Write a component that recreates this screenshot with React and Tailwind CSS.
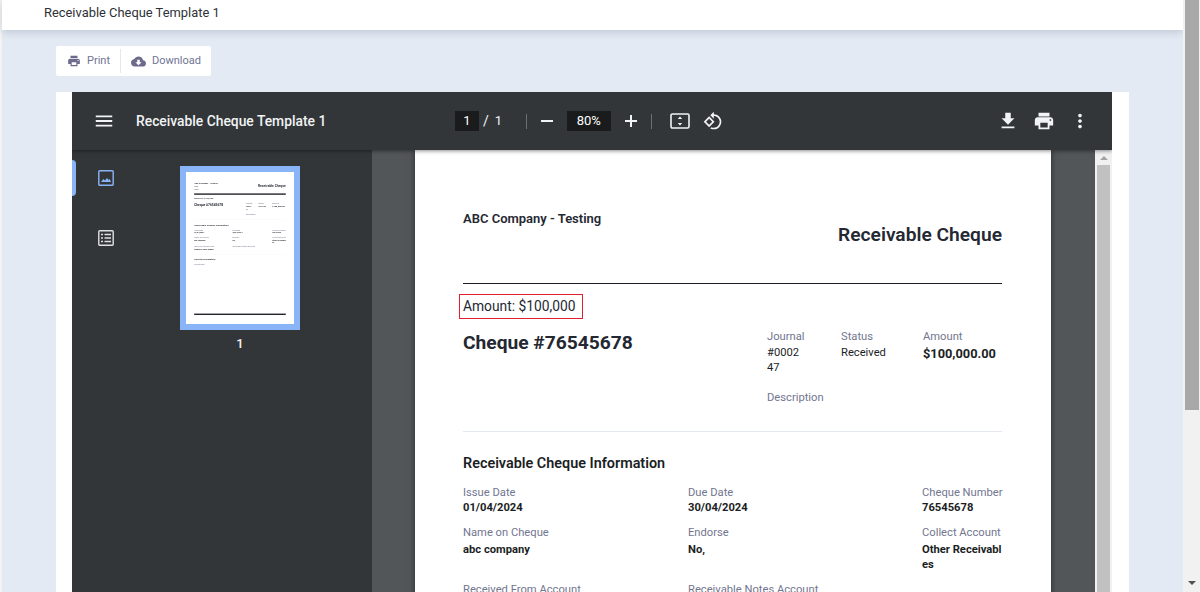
import React from "react";

const roboto = "[font-family:Roboto,sans-serif]";

function Icon({ d, className }) {
  return (
    <svg viewBox="0 0 24 24" fill="currentColor" className={className}>
      <path d={d} />
    </svg>
  );
}

const icons = {
  print: "M19 8H5c-1.66 0-3 1.34-3 3v6h4v4h12v-4h4v-6c0-1.66-1.34-3-3-3zm-3 11H8v-5h8v5zm3-7c-.55 0-1-.45-1-1s.45-1 1-1 1 .45 1 1-.45 1-1 1zm-1-9H6v4h12V3z",
  cloud: "M19.35 10.04C18.67 6.59 15.64 4 12 4 9.11 4 6.6 5.64 5.35 8.04 2.34 8.36 0 10.91 0 14c0 3.31 2.69 6 6 6h13c2.76 0 5-2.24 5-5 0-2.64-2.05-4.78-4.65-4.96zM17 13l-5 5-5-5h3V9h4v4h3z",
  download: "M19 9h-4V3H9v6H5l7 7 7-7zM5 18v2h14v-2H5z",
  menu: "M3 18h18v-2H3v2zm0-5h18v-2H3v2zm0-7v2h18V6H3z",
  more: "M12 8c1.1 0 2-.9 2-2s-.9-2-2-2-2 .9-2 2 .9 2 2 2zm0 2c-1.1 0-2 .9-2 2s.9 2 2 2 2-.9 2-2-.9-2-2-2zm0 6c-1.1 0-2 .9-2 2s.9 2 2 2 2-.9 2-2-.9-2-2-2z",
  rotate: "M7.34 6.41L.86 12.9l6.49 6.48 6.49-6.48-6.5-6.49zM3.69 12.9l3.66-3.66L11 12.9l-3.66 3.66-3.65-3.66zm15.67-6.26C17.61 4.88 15.3 4 13 4V.76L8.76 5 13 9.24V6c1.79 0 3.58.68 4.95 2.05 2.73 2.73 2.73 7.17 0 9.9C16.58 19.32 14.79 20 13 20c-.97 0-1.94-.21-2.84-.61l-1.49 1.49C10.02 21.62 11.51 22 13 22c2.3 0 4.61-.88 6.36-2.64 3.52-3.51 3.52-9.21 0-12.72z",
};

function Field({ label, value, className }) {
  return (
    <div className={className}>
      <div className="text-[11.2px] leading-[15px] text-[#72768f] whitespace-nowrap">{label}</div>
      {value && <div className="text-[11.2px] leading-[15px] font-bold text-[#1b1e24] break-all">{value}</div>}
    </div>
  );
}

// the pdf page, also used scaled down for the thumbnail
function PdfPage({ thumb }) {
  return (
    <div className={`w-[636px] h-[899px] bg-white flex flex-col pl-[48px] pr-[49px] text-[#1b1e24] ${roboto}`}>
      <div className={`h-[134px] relative pt-[61px] border-[#1b1e24] ${thumb ? "border-b-[8px]" : "border-b"}`}>
        <div className="text-[13px] leading-[16px] font-semibold text-[#242832]">ABC Company - Testing</div>
        {thumb && (
          <div className="text-[9px] leading-[18px] text-[#555]">
            <div>street</div>
            <div>village</div>
          </div>
        )}
        <div className="absolute right-0 top-[73px] text-[19.2px] leading-[24px] font-semibold text-[#242832]">Receivable Cheque</div>
      </div>
      <div className={`mt-[10px] -ml-[4px] w-[124px] h-[25px] border pl-[3px] text-[13.8px] leading-[22px] text-[#242832] whitespace-nowrap ${thumb ? "border-transparent" : "border-[#e0202e]"}`}>
        Amount: $100,000
      </div>
      <div className="flex pb-[26px] border-b border-[#e4e8f0] h-[113px]">
        <div className="w-[304px] pt-[12px] text-[19.2px] leading-[24px] font-bold text-[#242832]">Cheque #76545678</div>
        <div className="w-[74px] pt-[10px] text-[11.2px] leading-[15px]">
          <div className="text-[#72768f]">Journal</div>
          <div className="mt-px w-[38px] break-all">#000247</div>
          <div className="mt-[15px] text-[#72768f]">Description</div>
        </div>
        <div className="w-[82px] pt-[10px] text-[11.2px] leading-[15px]">
          <div className="text-[#72768f]">Status</div>
          <div className="mt-px">Received</div>
        </div>
        <div className="pt-[10px] text-[11.2px] leading-[15px]">
          <div className="text-[#72768f]">Amount</div>
          <div className="mt-px font-bold text-[12.8px] leading-[18px]">$100,000.00</div>
        </div>
      </div>
      <div className="mt-[23px] text-[14.4px] leading-[18px] font-semibold text-[#1b1e24]">Receivable Cheque Information</div>
      <div className="mt-[12px] grid grid-cols-[225px_234px_80px] content-start gap-y-[10px] h-[96px]">
        <Field label="Issue Date" value="01/04/2024" />
        <Field label="Due Date" value="30/04/2024" />
        <Field label="Cheque Number" value="76545678" />
        <Field label="Name on Cheque" value="abc company" className="[&>div:last-child]:mt-[2px]" />
        <Field label="Endorse" value="No," className="[&>div:last-child]:mt-[2px]" />
        <Field label="Collect Account" value="Other Receivables" className="[&>div:last-child]:mt-[2px]" />
      </div>
      <div className="mt-[1px] grid grid-cols-[225px_234px_80px] h-[51px]">
        <Field label="Received From Account" value="Employee Meal Sundry" />
        <Field label="Receivable Notes Account" />
      </div>
      <div className="border-t border-[#e4e8f0] pt-[20px] text-[14.4px] leading-[18px] font-semibold">Collect Information</div>
      <div className="mt-[12px] text-[11.2px] leading-[15px] text-[#72768f]">Collect Date</div>
      <div className={`mt-auto mb-[58px] border-[#1b1e24] ${thumb ? "border-t-[8px]" : "border-t"}`} />
    </div>
  );
}

function ToolbarIcon({ d, className = "" }) {
  return <Icon d={d} className={`w-[22px] h-[22px] text-[#f1f3f4] shrink-0 ${className}`} />;
}

function Toolbar() {
  return (
    <div className={`h-[58px] bg-[#323639] flex items-center relative z-10 shadow-[0_1px_4px_rgba(0,0,0,0.45)] text-white ${roboto}`}>
      <ToolbarIcon d={icons.menu} className="ml-[21px]" />
      <div className="ml-[21px] mt-[1px] w-[319px] text-[13.85px] font-medium text-[#f1f3f4] whitespace-nowrap">Receivable Cheque Template 1</div>
      <div className="w-[24px] h-[20px] bg-[#191b1c] text-[13px] leading-[20px] text-center">1</div>
      <span className="ml-[4px] text-[14px] text-[#f1f3f4]">/</span>
      <span className="ml-[6px] w-[31px] text-[13px] text-[#f1f3f4]">1</span>
      <div className="w-px h-[15px] bg-[#6b6f72]" />
      <svg viewBox="0 0 14 14" className="ml-[13px] w-[14px] h-[14px] text-[#f1f3f4]" fill="currentColor"><rect x="1" y="6" width="12" height="2" /></svg>
      <div className="ml-[13px] w-[44px] h-[20px] bg-[#191b1c] text-[13px] leading-[20px] text-center">80%</div>
      <svg viewBox="0 0 14 14" className="ml-[13px] w-[14px] h-[14px] text-[#f1f3f4]" fill="currentColor"><path d="M6 1h2v5h5v2H8v5H6V8H1V6h5z" /></svg>
      <div className="ml-[13px] w-px h-[15px] bg-[#6b6f72]" />
      {/* fit to page */}
      <svg viewBox="0 0 20 16" className="ml-[18px] w-[20px] h-[16px] text-[#f1f3f4]" fill="none" stroke="currentColor" strokeWidth="1.6">
        <rect x="1" y="1" width="18" height="14" rx="1.4" />
        <path d="M10 3.4l2.2 2.6H7.8zM10 12.6l2.2-2.6H7.8z" fill="currentColor" stroke="none" />
      </svg>
      <ToolbarIcon d={icons.rotate} className="ml-[13px] !w-[20px] !h-[20px]" />
      <div className="ml-auto flex items-center gap-[14px] pr-[21px]">
        <ToolbarIcon d={icons.download} />
        <ToolbarIcon d={icons.print} />
        <ToolbarIcon d={icons.more} />
      </div>
    </div>
  );
}

function Sidebar() {
  return (
    <div className={`w-[300px] h-full bg-[#323639] flex shrink-0 ${roboto}`}>
      <div className="w-[68px] shrink-0 relative flex flex-col items-center pt-[20px] gap-[44px]">
        <div className="absolute left-0 top-[10px] w-[4px] h-[36px] bg-[#8ab4f8] rounded-r" />
        <svg viewBox="0 0 16 16" className="w-[16px] h-[16px] text-[#8ab4f8]" fill="none" stroke="currentColor" strokeWidth="1.4">
          <rect x="0.8" y="0.8" width="14.4" height="14.4" rx="1" />
          <path d="M3 12l2.4-3 1.6 1.6L9 8l1.6 2 1-1L13 12z" fill="currentColor" stroke="none" />
        </svg>
        <svg viewBox="0 0 16 16" className="w-[16px] h-[16px] text-[#dfe1e2]" fill="none" stroke="currentColor" strokeWidth="1.4">
          <rect x="0.8" y="0.8" width="14.4" height="14.4" rx="1" />
          <path d="M3 4.5h2M6.5 4.5H13M3 8h2M6.5 8H13M3 11.5h2M6.5 11.5H13" strokeWidth="1.6" />
        </svg>
      </div>
      <div className="ml-[40px] pt-[16px] flex flex-col items-center w-[120px]">
        <div className="w-[120px] h-[164px] bg-[#8ab4f8] p-[6px]">
          <div className="w-[108px] h-[152px] overflow-hidden bg-white">
            <div className="origin-top-left scale-[0.17] blur-[1px]">
              <PdfPage thumb />
            </div>
          </div>
        </div>
        <div className="mt-[5px] text-[13px] leading-[18px] font-medium text-[#f1f3f4]">1</div>
      </div>
    </div>
  );
}

function InnerScrollbar() {
  return (
    <div className="w-[17px] h-full shrink-0 bg-[#f1f1f1] flex flex-col items-center pt-[6px]">
      <div className="w-0 h-0 border-x-[4px] border-x-transparent border-b-[4px] border-b-[#a3a3a3]" />
      <div className="mt-[5px] w-[13px] flex-1 bg-[#c1c1c1]" />
    </div>
  );
}

export default function App() {
  return (
    <div className={`w-[1200px] h-[592px] overflow-hidden flex bg-[#e4eaf3] ${roboto}`}>
      <div className="w-[2px] shrink-0 bg-[#f3f3f3]" />
      <div className="w-[1181px] shrink-0 flex flex-col">
        <div className="h-[30px] shrink-0 bg-white pl-[42px] text-[12.9px] leading-[26px] text-[#2e3138] shadow-[0_2px_8px_rgba(70,85,120,0.25)]">
          Receivable Cheque Template 1
        </div>
        <div className="mt-[16px] ml-[54px] w-[155px] h-[30px] shrink-0 bg-white rounded-[2px] flex items-center text-[11px] text-[#6f7594]">
          <div className="flex items-center pl-[11px] w-[65px] h-[24px] border-r border-[#e4e8f0]">
            <Icon d={icons.print} className="w-[14px] h-[14px] text-[#6d6a8c]" />
            <span className="ml-[6px]">Print</span>
          </div>
          <div className="flex items-center pl-[10px]">
            <Icon d={icons.cloud} className="w-[15px] h-[15px] text-[#6d6a8c]" />
            <span className="ml-[6px]">Download</span>
          </div>
        </div>
        <div className="mt-[16px] ml-[54px] w-[1073px] flex-1 min-h-0 bg-white px-[16px]">
          <div className="h-full w-[1040px] flex flex-col overflow-hidden">
            <Toolbar />
            <div className="flex-1 min-h-0 flex overflow-hidden">
              <Sidebar />
              <div className="flex-1 h-full bg-[#525659] overflow-hidden pl-[43px]">
                <div className="w-[636px] shadow-[0_0_6px_rgba(0,0,0,0.5)]">
                  <PdfPage />
                </div>
              </div>
              <InnerScrollbar />
            </div>
          </div>
        </div>
      </div>
      <div className="flex-1 bg-[#f1f1f1] flex flex-col items-center px-[2px]">
        <div className="w-[14px] h-[410px] bg-[#a8a8a8]" />
        <div className="mt-auto mb-[7px] w-0 h-0 border-x-[4px] border-x-transparent border-t-[4px] border-t-[#505050]" />
      </div>
    </div>
  );
}
